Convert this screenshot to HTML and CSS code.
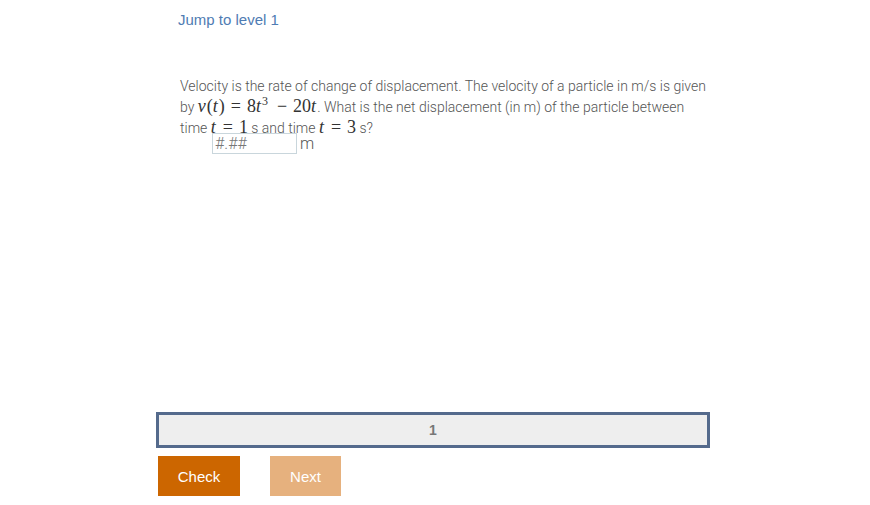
FILE: index.html
```html
<!DOCTYPE html>
<html>
<head>
<meta charset="utf-8">
<link rel="stylesheet" href="styles.css">
</head>
<body>
<div class="page">
  <div class="jump">Jump to level 1</div>
  <div class="question">
    <p class="qtext">Velocity is the rate of change of displacement. The velocity of a particle in m/s is given by <span class="math"><i>v</i>(<i>t</i>)<span class="op">=</span>8<i>t</i><sup>3</sup><span class="op">&minus;</span>20<i>t</i></span>. What is the net displacement (in m) of the particle between time <span class="math"><i>t</i><span class="op">=</span>1</span> s and time <span class="math"><i>t</i><span class="op">=</span>3</span> s?</p>
    <div class="answer">
      <input class="ans" type="text" placeholder="#.##">
      <span class="unit">m</span>
    </div>
  </div>
  <div class="levels"><span class="lvl">1</span></div>
  <div class="buttons">
    <button class="btn check">Check</button>
    <button class="btn next">Next</button>
  </div>
</div>
</body>
</html>
```
FILE: styles.css
```css
html, body { margin: 0; padding: 0; background: #fff; }
.page {
  width: 554px;
  margin-left: 156px;
  font-family: "Liberation Sans", Arial, sans-serif;
}
.jump {
  margin-left: 22px;
  padding-top: 12px;
  font-size: 15px;
  line-height: 16px;
  color: #4f7cb3;
}
.question {
  margin-top: 48px;
  margin-left: 24px;
  width: 540px;
  height: 336px;
  font-family: Roboto, sans-serif;
  font-weight: 300;
  font-size: 14px;
  color: #555;
}
.qtext {
  margin: 0;
  line-height: 21px;
  width: 528px;
}
.math {
  font-family: "Liberation Serif", "DejaVu Serif", serif;
  font-size: 18px;
  line-height: 1;
  font-weight: 400;
  color: #333;
}
.math i { font-style: italic; margin-right: 1px; }
.math .op { margin: 0 6px; }
.math sup { font-size: 12px; line-height: 0; vertical-align: 7px; margin-right: 3px; }
.answer {
  display: flex;
  align-items: center;
  margin-left: 32px;
  margin-top: -6px;
  gap: 3px;
}
.ans {
  box-sizing: border-box;
  width: 85px;
  height: 21px;
  padding: 0 2px;
  border: 1px solid #c9d6dc;
  font-family: Roboto, sans-serif;
  font-weight: 300;
  font-size: 16px;
  color: #555;
  outline: none;
  margin: 0;
}
.ans::placeholder { color: #777; }
.unit { font-size: 16px; color: #555; }
.levels {
  box-sizing: border-box;
  height: 36px;
  border: 3px solid #546a8c;
  background: #eeeeee;
  display: flex;
  align-items: center;
  justify-content: center;
}
.lvl {
  font-weight: bold;
  font-size: 14px;
  color: #777;
}
.buttons {
  display: flex;
  gap: 30px;
  margin-top: 8px;
  margin-left: 2px;
}
.btn {
  border: none;
  height: 40px;
  padding: 0;
  font-family: "Liberation Sans", Arial, sans-serif;
  font-size: 15px;
  color: #fff;
}
.check { width: 82px; background: #cc6600; }
.next { width: 71px; background: #e6b17e; }
```
